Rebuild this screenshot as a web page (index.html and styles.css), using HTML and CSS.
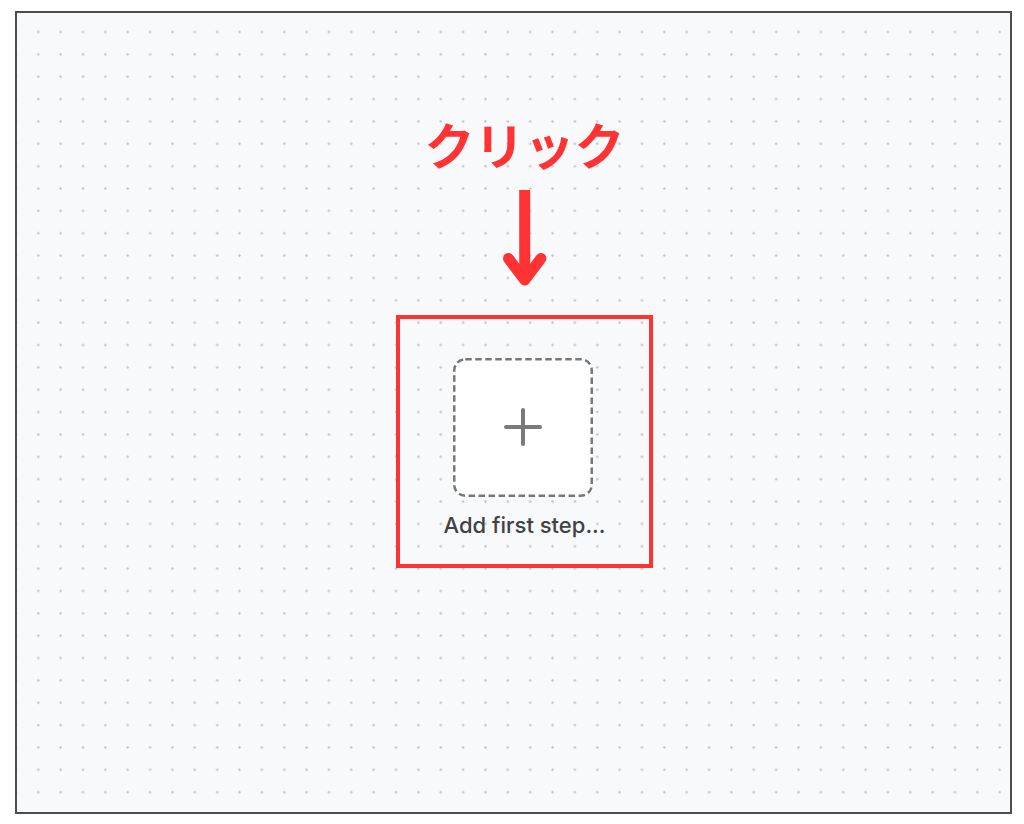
FILE: index.html
```html
<!DOCTYPE html>
<html lang="ja">
<head>
<meta charset="utf-8">
<title>Flow</title>
<link rel="stylesheet" href="styles.css">
</head>
<body>
<div class="canvas">
  <div class="stack">
    <div class="callout">クリック</div>
    <svg class="arrow" width="46" height="100" viewBox="0 0 46 100" aria-hidden="true">
      <path d="M22.7 2 V90" fill="none" stroke="#ff3333" stroke-width="11" stroke-linecap="butt"/>
      <path d="M6.5 70.5 L22.7 92 L38.9 70.5" fill="none" stroke="#ff3333" stroke-width="11" stroke-linecap="round" stroke-linejoin="round"/>
    </svg>
    <div class="highlight">
      <div class="add-box">
        <svg class="add-frame" width="140" height="139" viewBox="0 0 140 139" aria-hidden="true">
          <rect x="1.25" y="1.25" width="137.5" height="136.5" rx="11" ry="11" fill="#ffffff" stroke="#777777" stroke-width="2.5" stroke-dasharray="6.5 3.5"/>
          <path d="M70 52 V86 M53 69 H87" fill="none" stroke="#7a7a7a" stroke-width="4" stroke-linecap="round"/>
        </svg>
      </div>
      <div class="label">Add first step...</div>
    </div>
  </div>
</div>
</body>
</html>
```

FILE: styles.css
```css
html, body {
  margin: 0;
  padding: 0;
  background: #ffffff;
}

body {
  font-family: "Inter", "Liberation Sans", sans-serif;
}

.canvas {
  box-sizing: border-box;
  width: 997px;
  height: 803px;
  margin: 11px 0 0 15px;
  border: 2px solid #4d4d4d;
  background-color: #f8f9fb;
  background-image: radial-gradient(circle, #c3c5cb 0.9px, rgba(195, 197, 203, 0) 1.5px);
  background-size: 22.37px 22.37px;
  background-position: 10.1px 7.8px;
  display: flex;
  justify-content: center;
  padding-left: 22px;
}

.stack {
  display: flex;
  flex-direction: column;
  align-items: center;
  padding-top: 105px;
}

.callout {
  font-family: "Noto Sans CJK JP", sans-serif;
  font-weight: 700;
  font-size: 50px;
  line-height: 50px;
  color: #ff3333;
  white-space: nowrap;
}

.arrow {
  display: block;
  margin-top: 20px;
  margin-left: 1px;
}

.highlight {
  box-sizing: border-box;
  width: 257px;
  height: 253px;
  margin-top: 27px;
  border: 4px solid #ff3333;
  display: flex;
  flex-direction: column;
  align-items: center;
  padding-top: 39px;
}

.add-box {
  width: 140px;
  height: 139px;
  margin-right: 3px;
}

.add-frame {
  display: block;
}

.label {
  margin-top: 15px;
  font-size: 22px;
  line-height: 26px;
  font-weight: 500;
  color: #424242;
  white-space: nowrap;
}
```
